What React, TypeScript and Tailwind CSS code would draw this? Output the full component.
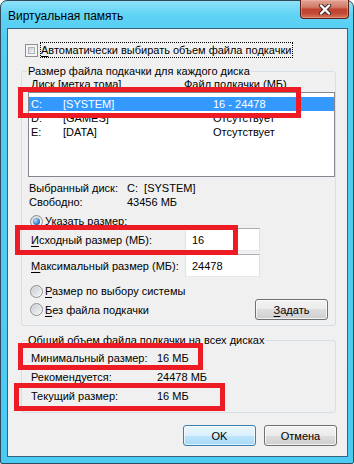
import React from "react";

const U = ({ children }: { children: React.ReactNode }) => (
  <span className="underline underline-offset-[2px] decoration-[1px]">{children}</span>
);

function Checkbox() {
  return (
    <div className="w-[13px] h-[13px] border border-[#8e8f8f] bg-[#f4f4f4] p-[2px] shrink-0">
      <div className="w-full h-full border border-[#aeb3b9] bg-[linear-gradient(135deg,#cbcfd5,#f6f6f6)]" />
    </div>
  );
}

function Radio({ checked }: { checked?: boolean }) {
  return (
    <div className="w-[13px] h-[13px] rounded-full border border-[#8e8f8f] bg-[linear-gradient(135deg,#d2d4d8,#fcfcfc)] flex items-center justify-center shrink-0">
      {checked ? (
        <div className="w-[7px] h-[7px] rounded-full bg-[radial-gradient(circle_at_35%_35%,#b5e2fc,#2a75c4_65%,#164d8c)]" />
      ) : (
        <div className="w-[9px] h-[9px] rounded-full bg-[linear-gradient(135deg,#c9ccd1,#f4f4f5)]" />
      )}
    </div>
  );
}

function Btn({ children, def }: { children: React.ReactNode; def?: boolean }) {
  return (
    <div
      className={
        def
          ? "h-[21px] w-[73px] shrink-0 rounded-[3px] border border-[#3c7fb1] bg-[linear-gradient(#eaf6fd_0%,#d9f0fc_50%,#bee6fd_50%,#a7d9f5_100%)] shadow-[inset_0_0_0_1px_rgba(255,255,255,0.6)] flex items-center justify-center"
          : "h-[21px] w-[73px] shrink-0 rounded-[3px] border border-[#707070] bg-[linear-gradient(#f2f2f2_0%,#ebebeb_50%,#dddddd_50%,#cfcfcf_100%)] shadow-[inset_0_0_0_1px_rgba(255,255,255,0.7)] flex items-center justify-center"
      }
    >
      {children}
    </div>
  );
}

function Input({ value }: { value: string }) {
  return (
    <div className="w-[75px] h-[23px] bg-white border border-[#abadb3] border-l-[#e2e3ea] border-r-[#dbdfe6] border-b-[#e3e9ef] flex items-center pl-[6px]">
      {value}
    </div>
  );
}

function RedBox({ cls }: { cls: string }) {
  return <div className={"absolute border-[5px] border-[#ed1c24] " + cls} />;
}

export default function App() {
  return (
    <div className="relative w-[354px] h-[464px] font-['Liberation_Sans',Arial,sans-serif] text-[11px] leading-[14px] text-black bg-white whitespace-nowrap">
      <div className="w-[354px] h-[464px] rounded-t-[7px] rounded-b-[2px] border border-[#2f4a5c] bg-[linear-gradient(180deg,#8fe1f9_0px,#5fd3f5_14px,#50cdf3_40px,#4ccbf2_100%)] flex flex-col">
        {/* title bar */}
        <div className="h-[27px] pt-[3px] pl-[7px] flex items-center relative shrink-0 text-[12px]">
          <span>Виртуальная память</span>
          <div className="absolute left-[299px] top-[-1px] w-[49px] h-[19px] rounded-b-[4px] border border-[#5a2018] border-t-0 bg-[linear-gradient(180deg,#e3a596_0%,#d07a66_40%,#bf4330_52%,#c24a34_75%,#d9785a_100%)] shadow-[inset_0_0_0_1px_rgba(255,200,190,0.35)] flex items-center justify-center">
            <svg width="14" height="11" viewBox="0 0 14 11">
              <path d="M3 1.5 L11 9.5 M11 1.5 L3 9.5" stroke="#3b2a2a" strokeWidth="4.2" strokeLinecap="round" />
              <path d="M3 1.5 L11 9.5 M11 1.5 L3 9.5" stroke="#ffffff" strokeWidth="2.4" strokeLinecap="round" />
            </svg>
          </div>
        </div>

        {/* client */}
        <div className="ml-[6px] w-[341px] h-[429px] border border-[#35647f] bg-[#f0f0f0] flex flex-col shrink-0">
          {/* checkbox row */}
          <div className="mt-[13px] h-[16px] pl-[17px] flex items-center">
            <Checkbox />
            <div className="ml-[2px] h-[16px] border border-dotted border-black flex items-center pr-[1px]">
              <span>
                <U>А</U>втоматически выбирать объем файла подкачки
              </span>
            </div>
          </div>

          {/* group 1 */}
          <div className="mt-[13px] ml-[13px] w-[315px] h-[255px] border border-[#d5dfe5] rounded-[3px] relative flex flex-col shrink-0">
            <div className="absolute left-[5px] top-[-8px] px-[1px] bg-[#f0f0f0]">
              Размер файла подкачки для каждого диска
            </div>
            <div className="mt-[5px] h-[14px] pl-[9px] flex">
              <div className="w-[153px]">Диск [метка тома]</div>
              <div>Файл подкачки (МБ)</div>
            </div>
            <div className="mt-[1px] ml-[6px] w-[307px] h-[85px] border border-[#828790] bg-white pt-[4px] flex flex-col">
              <div className="h-[14px] pl-[2px] flex items-center bg-[#3399ff] text-white">
                <div className="w-[32px]">C:</div>
                <div className="w-[150px]">[SYSTEM]</div>
                <div>16 - 24478</div>
              </div>
              <div className="h-[14px] pl-[2px] flex items-center">
                <div className="w-[32px]">D:</div>
                <div className="w-[150px]">[GAMES]</div>
                <div>Отсутствует</div>
              </div>
              <div className="h-[14px] pl-[2px] flex items-center">
                <div className="w-[32px]">E:</div>
                <div className="w-[150px]">[DATA]</div>
                <div>Отсутствует</div>
              </div>
            </div>
            <div className="mt-[4px] h-[14px] pl-[7px] flex">
              <div className="w-[98px]">Выбранный диск:</div>
              <div>C:&nbsp;&nbsp;[SYSTEM]</div>
            </div>
            <div className="h-[14px] pl-[7px] flex">
              <div className="w-[98px]">Свободно:</div>
              <div>43456 МБ</div>
            </div>
            <div className="mt-[5px] h-[14px] pl-[8px] flex items-center">
              <Radio checked />
              <span className="ml-[2px]">Указать размер:</span>
            </div>
            <div className="h-[23px] pl-[9px] flex items-center">
              <div className="w-[154px]">
                <U>И</U>сходный размер (МБ):
              </div>
              <Input value="16" />
            </div>
            <div className="mt-[3px] h-[23px] pl-[9px] flex items-center">
              <div className="w-[154px]">
                <U>М</U>аксимальный размер (МБ):
              </div>
              <Input value="24478" />
            </div>
            <div className="mt-[7px] h-[14px] pl-[8px] flex items-center">
              <Radio />
              <span className="ml-[2px]">
                <U>Р</U>азмер по выбору системы
              </span>
            </div>
            <div className="mt-[1px] h-[21px] pl-[8px] pr-[7px] flex items-center justify-between">
              <div className="flex items-center">
                <Radio />
                <span className="ml-[2px]">
                  <U>Б</U>ез файла подкачки
                </span>
              </div>
              <Btn>
                <span>
                  <U>З</U>адать
                </span>
              </Btn>
            </div>
          </div>

          {/* group 2 */}
          <div className="mt-[14px] ml-[13px] w-[315px] h-[73px] border border-[#d5dfe5] rounded-[3px] relative flex flex-col gap-[5px] pt-[10px] shrink-0">
            <div className="absolute left-[5px] top-[-8px] px-[1px] bg-[#f0f0f0]">
              Общий объем файла подкачки на всех дисках
            </div>
            <div className="h-[14px] pl-[9px] flex">
              <div className="w-[126px]">Минимальный размер:</div>
              <div>16 МБ</div>
            </div>
            <div className="h-[14px] pl-[9px] flex">
              <div className="w-[126px]">Рекомендуется:</div>
              <div>24478 МБ</div>
            </div>
            <div className="h-[14px] pl-[9px] flex">
              <div className="w-[126px]">Текущий размер:</div>
              <div>16 МБ</div>
            </div>
          </div>

          {/* buttons */}
          <div className="mt-[12px] pr-[10px] flex justify-end gap-[8px]">
            <Btn def>OK</Btn>
            <Btn>Отмена</Btn>
          </div>
        </div>
      </div>

      {/* red annotation boxes */}
      <RedBox cls="left-[18px] top-[87px] w-[283px] h-[31px]" />
      <RedBox cls="left-[15px] top-[225px] w-[223px] h-[30px]" />
      <RedBox cls="left-[18px] top-[343px] w-[185px] h-[27px]" />
      <RedBox cls="left-[14px] top-[383px] w-[211px] h-[28px]" />
    </div>
  );
}
